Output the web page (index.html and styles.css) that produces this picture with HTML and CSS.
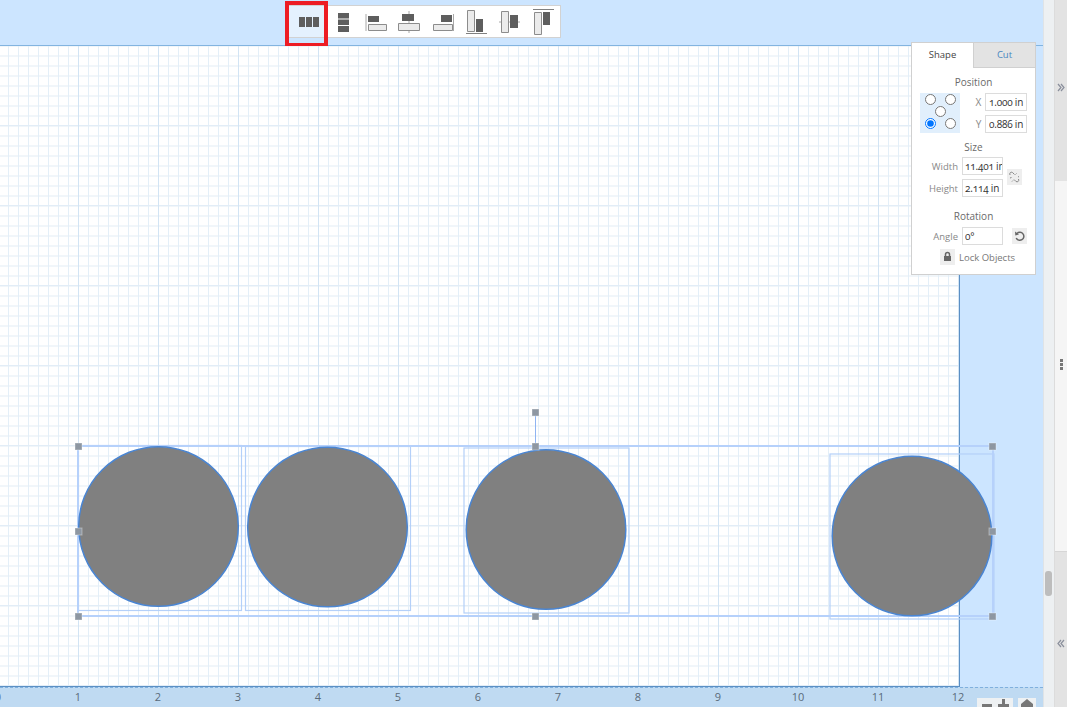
FILE: index.html
```html
<!DOCTYPE html>
<html lang="en">
<head>
<meta charset="utf-8">
<title>Align and distribute</title>
<link rel="stylesheet" href="styles.css">
</head>
<body>
<div class="app">
  <main class="workspace">
    <header class="topbar">
      <div class="toolbar">
        <button class="tool tool-active"><svg width="36" height="30" viewBox="289 6 36 30"><path class="dark" d="M299 16h6v10h-6zM306 16h6v10h-6zM313 16h6v10h-6z"/></svg></button>
        <button class="tool"><svg width="33" height="30" viewBox="325 6 33 30"><path class="dark" d="M338 12h11v5.500h-11zM338 18.500h11v5.500h-11zM338 25h11v6h-11z"/></svg></button>
        <button class="tool"><svg width="33" height="30" viewBox="358 6 33 30"><path class="rule" d="M366 13v17"/><path class="dark" d="M368 15h11v6h-11z"/><path class="light" d="M368.500 23.500h18v6h-18z"/></svg></button>
        <button class="tool"><svg width="33" height="30" viewBox="391 6 33 30"><path class="rule" d="M409 10v22"/><path class="dark" d="M402 13h12v7h-12z"/><path class="light" d="M398.500 22.500h21v7h-21z"/></svg></button>
        <button class="tool"><svg width="33" height="30" viewBox="424 6 33 30"><path class="rule" d="M453.500 13v17"/><path class="dark" d="M441 14h11v7h-11z"/><path class="light" d="M433.500 23.500h19v6h-19z"/></svg></button>
        <button class="tool"><svg width="33" height="30" viewBox="457 6 33 30"><path class="rule-dark" d="M466 32.500h21"/><path class="light" d="M467.500 9.500h7v21h-7z"/><path class="dark" d="M476 18h7v13h-7z"/></svg></button>
        <button class="tool"><svg width="33" height="30" viewBox="490 6 33 30"><path class="rule" d="M499 21h21"/><path class="light" d="M501.500 10.500h7v21h-7z"/><path class="dark" d="M510 14h8v13h-8z"/></svg></button>
        <button class="tool"><svg width="33" height="30" viewBox="523 6 33 30"><path class="rule-dark" d="M533 8.500h21"/><path class="light" d="M534.500 11.500h7v22h-7z"/><path class="dark" d="M543 11h7v13h-7z"/></svg></button>
      </div>
      <div class="highlight"></div>
    </header>

    <section class="canvas">
      <div class="sheet"></div>
      <svg class="shapes" width="1043" height="641" viewBox="0 46 1043 641">
        <g class="box">
          <rect x="78.500" y="445.500" width="163" height="165"/>
          <rect x="245.500" y="446.500" width="165" height="164"/>
          <rect x="464" y="448" width="165" height="165"/>
          <rect x="830" y="454" width="164" height="165"/>
        </g>
        <rect class="group" x="78" y="446" width="915" height="170"/>
        <g class="circle">
          <circle cx="158.500" cy="526.500" r="79.800"/>
          <circle cx="327.500" cy="527" r="79.800"/>
          <circle cx="546" cy="529.500" r="79.800"/>
          <circle cx="912" cy="536" r="79.800"/>
        </g>
        <path class="stem" d="M535.500 412v34"/>
        <g class="handle">
          <rect x="532" y="409" width="7" height="7"/>
          <rect x="75" y="443" width="7" height="7"/>
          <rect x="532" y="443" width="7" height="7"/>
          <rect x="989" y="443" width="7" height="7"/>
          <rect x="75" y="528" width="7" height="7"/>
          <rect x="989" y="528" width="7" height="7"/>
          <rect x="75" y="613" width="7" height="7"/>
          <rect x="532" y="613" width="7" height="7"/>
          <rect x="989" y="613" width="7" height="7"/>
        </g>
      </svg>
    </section>

    <footer class="ruler">
      <div class="ticks">
        <span>0</span><span>1</span><span>2</span><span>3</span><span>4</span><span>5</span><span>6</span><span>7</span><span>8</span><span>9</span><span>10</span><span>11</span><span>12</span>
      </div>
      <div class="zoom">
        <div class="zoom-pair">
          <svg width="36" height="9" viewBox="0 0 36 9"><path class="zoom-glyph" d="M5 6h10v3H5zM21 6h4V1h3v5h4v3H21z"/></svg>
        </div>
        <div class="zoom-home">
          <svg width="18" height="9" viewBox="0 0 18 9"><path class="zoom-glyph" d="M3 9V6l6-5 6 5v3z"/></svg>
        </div>
      </div>
    </footer>

    <aside class="panel">
      <div class="tabs">
        <div class="tab tab-on">Shape</div>
        <div class="tab tab-off">Cut</div>
      </div>
      <div class="panel-body">
        <h3 class="heading heading-first">Position</h3>
        <div class="position">
          <div class="anchors">
            <input class="anchor a1" type="radio" name="anchor">
            <input class="anchor a2" type="radio" name="anchor">
            <input class="anchor a3" type="radio" name="anchor">
            <input class="anchor a4" type="radio" name="anchor" checked>
            <input class="anchor a5" type="radio" name="anchor">
          </div>
          <div class="coords">
            <label class="coord"><span class="label">X</span><input class="field field-pos" value="1.000 in"></label>
            <label class="coord"><span class="label">Y</span><input class="field field-pos" value="0.886 in"></label>
          </div>
        </div>
        <h3 class="heading heading-size">Size</h3>
        <div class="size">
          <div class="size-rows">
            <label class="row"><span class="label label-wide">Width</span><input class="field" value="11.401 in"></label>
            <label class="row"><span class="label label-wide">Height</span><input class="field" value="2.114 in"></label>
          </div>
          <div class="icon-btn link-btn">
            <svg width="15" height="16" viewBox="0 0 15 16"><path class="glyph-line" d="M3 6c-1-2 1-3.500 2.500-2.500l2 2M7 10.500l2 2c1.500 1 3.500-.5 2.500-2.500M8.500 5.500l1-1M11 8l1-.5M3 9l1.500-.5M6 11.500l-1 1"/></svg>
          </div>
        </div>
        <h3 class="heading heading-rotation">Rotation</h3>
        <div class="row rotation">
          <span class="label label-wide">Angle</span><input class="field" value="0°">
          <div class="icon-btn reset-btn">
            <svg width="15" height="16" viewBox="0 0 15 16"><path class="glyph-line glyph-strong" d="M5 5.500a4 4 0 1 1-.8 4.500"/><path class="glyph-fill" d="M3 3.500l.3 4 3.700-1z"/></svg>
          </div>
        </div>
        <div class="lock">
          <div class="icon-btn">
            <svg width="15" height="15" viewBox="0 0 15 15"><path class="glyph-fill" d="M4 7h7v5H4z"/><path class="glyph-line glyph-strong" d="M5.500 7V5.500a2 2 0 0 1 4 0V7"/></svg>
          </div>
          <span class="lock-text">Lock Objects</span>
        </div>
      </div>
    </aside>
  </main>

  <div class="scrollbar"><div class="thumb"></div></div>

  <nav class="rail">
    <div class="rail-part rail-top">
      <svg width="8" height="9" viewBox="0 0 8 9"><path class="chev" d="M1 1l3 3.500L1 8M4 1l3 3.500L4 8"/></svg>
    </div>
    <div class="rail-part rail-mid">
      <svg width="3" height="11" viewBox="0 0 3 11"><path class="dots" d="M0 0h3v3H0zM0 4h3v3H0zM0 8h3v3H0z"/></svg>
    </div>
    <div class="rail-part rail-bot">
      <svg width="8" height="9" viewBox="0 0 8 9"><path class="chev" d="M4 1L1 4.500 4 8M7 1L4 4.500 7 8"/></svg>
    </div>
  </nav>
</div>
</body>
</html>
```

FILE: styles.css
```css
* { box-sizing: border-box; }

html, body { margin: 0; height: 100%; overflow: hidden; }

body {
  font-family: "Open Sans", "Noto Sans", sans-serif;
  font-feature-settings: "onum" 1;
  color: #666;
}

.app { display: flex; width: 1067px; height: 707px; }

.workspace {
  position: relative;
  width: 1044px;
  display: flex;
  flex-direction: column;
  background: #cce5ff;
  border-right: 1px solid #dfe3e6;
}

/* top bar */
.topbar {
  position: relative;
  height: 46px;
  padding: 5px 0 0 288px;
  border-bottom: 1px solid #82b4e0;
  background: #cce5ff;
}

.toolbar {
  display: flex;
  width: 273px;
  height: 33px;
  border: 1px solid #d2d2d2;
  background: #fff;
}

.tool {
  display: block;
  width: 33px;
  height: 31px;
  padding: 0;
  border: 0;
  background: transparent;
}

.tool svg { display: block; }

.tool-active { width: 36px; background: #e4f1fe; }

.dark { fill: #5e5e5e; }
.light { fill: #ebebeb; stroke: #8c8c8c; stroke-width: 1; }
.rule { fill: none; stroke: #a8a8a8; stroke-width: 1; }
.rule-dark { fill: none; stroke: #808080; stroke-width: 1; }

.highlight {
  position: absolute;
  left: 285px;
  top: 1px;
  width: 43px;
  height: 46px;
  border: 4px solid #ed1c24;
}

/* canvas */
.canvas { position: relative; flex: 1; }

.sheet {
  width: 960px;
  height: 100%;
  border-right: 1px solid #5b8fc4;
  border-bottom: 1px solid #5b8fc4;
  background-color: #fff;
  background-image:
    linear-gradient(to right, #d2e4f4 1px, transparent 1px),
    linear-gradient(to bottom, #e2edf7 1px, transparent 1px),
    linear-gradient(to right, #e4eff8 1px, transparent 1px),
    linear-gradient(to bottom, #f1f6fa 2px, transparent 2px);
  background-size: 80px 100%, 100% 80px, 10px 100%, 100% 10px;
  background-position: 78px 0, 0 79px, 8px 0, 0 9px;
}

.shapes { position: absolute; left: 0; top: 0; }

.box rect { fill: none; stroke: #b4d0f9; stroke-width: 1.200; }
.group { fill: none; stroke: #b6d1fb; stroke-width: 2; }
.circle circle { fill: #808080; stroke: #4a85d2; stroke-width: 1.500; }
.stem { fill: none; stroke: #8fb4f2; stroke-width: 1; }
.handle rect { fill: #8e97a2; stroke: #fff; stroke-opacity: .35; stroke-width: 1; }

/* bottom ruler */
.ruler {
  position: relative;
  height: 20px;
  background: #bfdaf2;
  border-top: 1px dashed #7fb0de;
  overflow: hidden;
}

.ticks { display: flex; margin-left: -42px; padding-top: 2px; }

.ticks span {
  flex: 0 0 80px;
  text-align: center;
  font-size: 11px;
  line-height: 14px;
  color: #5a6b7a;
  font-feature-settings: "lnum" 1;
}

.zoom {
  position: absolute;
  left: 977px;
  top: 10px;
  display: flex;
  gap: 5px;
}

.zoom-pair, .zoom-home { height: 10px; background: #eef1f3; }
.zoom-pair { width: 36px; }
.zoom-home { width: 18px; }
.zoom-pair svg, .zoom-home svg { display: block; }
.zoom-glyph { fill: #777; }

/* properties panel */
.panel {
  position: absolute;
  left: 911px;
  top: 42px;
  width: 125px;
  height: 233px;
  background: #fff;
  border: 1px solid #d0d0d0;
}

.tabs { display: flex; height: 25px; }

.tab {
  flex: 1;
  text-align: center;
  font-size: 9.500px;
  line-height: 24px;
}

.tab-on { color: #444; background: #fff; }

.tab-off {
  color: #4a86c0;
  background: #e3e3e3;
  border-left: 1px solid #d0d0d0;
  border-bottom: 1px solid #d0d0d0;
}

.panel-body { padding: 0 8px; }

.heading {
  margin: 0;
  text-align: center;
  font-size: 10px;
  font-weight: 400;
  line-height: 14px;
  color: #6a6a6a;
}

.heading-first { margin-top: 7px; }
.heading-size { margin-top: 7px; }
.heading-rotation { margin-top: 12px; }

.position { display: flex; margin-top: 4px; }

.anchors {
  display: grid;
  grid-template-columns: repeat(4, 10px);
  grid-template-rows: 12px 13px 11px;
  width: 40px;
  height: 40px;
  background: #e1effc;
}

.anchor {
  justify-self: center;
  align-self: center;
  width: 11px;
  height: 11px;
  margin: 0;
}

.a1 { grid-row: 1; grid-column: 1 / span 2; }
.a2 { grid-row: 1; grid-column: 3 / span 2; }
.a3 { grid-row: 2; grid-column: 2 / span 2; }
.a4 { grid-row: 3; grid-column: 1 / span 2; }
.a5 { grid-row: 3; grid-column: 3 / span 2; }

.coords {
  display: flex;
  flex-direction: column;
  gap: 4px;
  margin-left: 15px;
}

.coord { display: flex; align-items: center; gap: 3px; margin-top: 0; }

.label { font-size: 10px; color: #888; }

.coord .label { width: 7px; text-align: center; }

.label-wide { width: 42px; text-align: right; padding-right: 4px; font-size: 9.500px; }

.field {
  width: 41px;
  height: 18px;
  padding: 0 0 0 2px;
  border: 1px solid #dcdcdc;
  border-radius: 0;
  outline: 0;
  font: 10px "Open Sans", "Noto Sans", sans-serif;
  font-feature-settings: "onum" 1;
  letter-spacing: -0.2px;
  color: #333;
  background: #fff;
}

.field-pos { width: 42px; padding-left: 3px; }

.size { display: flex; margin-top: 3px; }
.size-rows { display: flex; flex-direction: column; gap: 4px; }
.row { display: flex; align-items: center; }

.icon-btn {
  width: 15px;
  height: 16px;
  background: #eeeeee;
}

.icon-btn svg { display: block; }

.link-btn { margin: 12px 0 0 4px; }

.rotation { margin-top: 4px; }
.reset-btn { margin-left: 9px; }

.glyph-line { fill: none; stroke: #888; stroke-width: 1; }
.glyph-strong { stroke: #666; stroke-width: 1.500; }
.glyph-fill { fill: #666; }

.lock {
  display: flex;
  align-items: center;
  margin: 4px 0 0 20px;
}

.lock-text { margin-left: 4px; font-size: 9.500px; color: #777; }

/* right side */
.scrollbar {
  position: relative;
  width: 10px;
  background: #edf0f2;
}

.thumb {
  position: absolute;
  left: 1px;
  top: 571px;
  width: 7px;
  height: 25px;
  border-radius: 3px;
  background: #bdbdbd;
}

.rail {
  display: flex;
  flex-direction: column;
  width: 13px;
  border-left: 1px solid #dcdcdc;
}

.rail-part { display: flex; justify-content: center; align-items: center; }

.rail-top { height: 181px; background: #e3e3e3; align-items: flex-start; padding-top: 83px; }
.rail-mid { height: 370px; background: #f5f5f5; padding-bottom: 3px; }
.rail-bot { flex: 1; background: #e3e3e3; align-items: flex-start; padding-top: 87px; border-top: 1px solid #d6d6d6; }

.chev { fill: none; stroke: #8a8f9c; stroke-width: 1.200; }
.dots { fill: #777; }
```
